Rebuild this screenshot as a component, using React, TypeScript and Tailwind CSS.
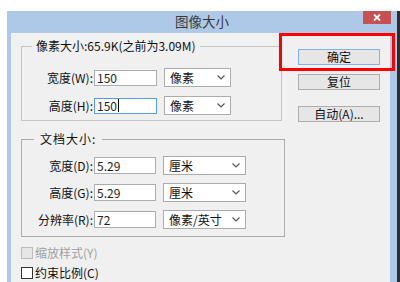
import React from "react";

const FONT = "font-['Microsoft_YaHei','Noto_Sans_CJK_SC',sans-serif]";

function Chevron() {
  return (
    <svg width="8" height="5" viewBox="0 0 8 5" className="shrink-0">
      <polyline points="0.5,0.5 4,4 7.5,0.5" fill="none" stroke="#555" strokeWidth="1.2" />
    </svg>
  );
}

function Field({
  label,
  value,
  unit,
  inputW,
  inputH,
  selectW,
  focused = false,
}: {
  label: string;
  value: string;
  unit: string;
  inputW: string;
  inputH: string;
  selectW: string;
  focused?: boolean;
}) {
  return (
    <div className="flex items-center h-[19px]">
      <div className="w-[71px] text-right text-[12px] leading-[16px] text-[#111]">{label}</div>
      <div
        className={`ml-[1px] ${inputW} ${inputH} flex items-center pl-[2px] bg-white border text-[12px] leading-[14px] text-[#222] ${
          focused ? "border-[#569de5]" : "border-[#abadb3]"
        }`}
      >
        {value}
        {focused && <span className="ml-[1px] w-[1px] h-[13px] bg-black" />}
      </div>
      <div
        className={`ml-[7px] ${selectW} h-[19px] flex items-center justify-between pl-[5px] pr-[5px] bg-white border border-[#acacac] text-[12px] leading-[14px] text-[#111]`}
      >
        <span>{unit}</span>
        <Chevron />
      </div>
    </div>
  );
}

function Button({ children, primary = false, className = "" }: { children: React.ReactNode; primary?: boolean; className?: string }) {
  return (
    <div
      className={`w-[82px] h-[16px] flex items-center justify-center bg-[#e6e6e6] border text-[12px] leading-[14px] text-[#111] ${
        primary ? "border-[#7eb4ea]" : "border-[#adadad]"
      } ${className}`}
    >
      {children}
    </div>
  );
}

export default function App() {
  return (
    <div className={`relative w-[400px] h-[282px] overflow-hidden bg-white pt-[11px] pl-[7px] ${FONT}`}>
      <div className="flex h-[271px]">
        <div className="flex flex-col w-[390px]">
          {/* title bar */}
          <div className="relative h-[22px] bg-[#adc9e7] flex items-center justify-center">
            <span className="text-[13.5px] leading-[16px] text-[#3a3a3a] mt-[-2px]">图像大小</span>
            <div className="absolute right-[6px] top-0 w-[28px] h-[13px] bg-[#c75050] flex items-center justify-center">
              <svg width="8" height="7" viewBox="0 0 8 7">
                <path d="M1 0.5 L7 6.5 M7 0.5 L1 6.5" stroke="#fff" strokeWidth="1.8" />
              </svg>
            </div>
          </div>

          {/* body */}
          <div className="flex flex-1 bg-[#f0f0f0] border-l-[4px] border-r-[7px] border-[#adc9e7]">
            <div className="pl-[10px] pt-[5px] flex flex-col">
              <fieldset className="w-[261px] border border-[#c4c4c4] pb-[5px]">
                <legend className="ml-[10px] px-[4px] text-[12px] leading-[16px] text-[#111]">
                  像素大小:65.9K(之前为3.09M)
                </legend>
                <div className="mt-[14px] flex flex-col gap-[9px]">
                  <Field label="宽度(W):" value="150" unit="像素" inputW="w-[63px]" inputH="h-[16px]" selectW="w-[67px]" />
                  <Field label="高度(H):" value="150" unit="像素" inputW="w-[63px]" inputH="h-[16px]" selectW="w-[67px]" focused />
                </div>
              </fieldset>

              <fieldset className="mt-[10px] w-[264px] border border-[#acacac] pb-[7px]">
                <legend className="ml-[12px] px-[6px] text-[12px] leading-[16px] tracking-[1px] text-[#111]">
                  文档大小:
                </legend>
                <div className="mt-[9px] flex flex-col gap-[8px]">
                  <Field label="宽度(D):" value="5.29" unit="厘米" inputW="w-[62px]" inputH="h-[17px]" selectW="w-[83px]" />
                  <Field label="高度(G):" value="5.29" unit="厘米" inputW="w-[62px]" inputH="h-[17px]" selectW="w-[83px]" />
                  <Field label="分辨率(R):" value="72" unit="像素/英寸" inputW="w-[62px]" inputH="h-[17px]" selectW="w-[83px]" />
                </div>
              </fieldset>

              <div className="mt-[9px] flex flex-col gap-[6px]">
                <div className="flex items-center h-[14px] gap-[2px]">
                  <div className="w-[12px] h-[12px] border border-[#bcbcbc] bg-[#e6e6e6]" />
                  <span className="text-[12px] leading-[14px] text-[#a0a0a0]">缩放样式(Y)</span>
                </div>
                <div className="flex items-center h-[14px] gap-[2px]">
                  <div className="w-[12px] h-[12px] border border-[#333] bg-white" />
                  <span className="text-[12px] leading-[14px] text-[#111]">约束比例(C)</span>
                </div>
              </div>
            </div>

            <div className="ml-[13px] pt-[16px] flex flex-col">
              <Button primary>确定</Button>
              <Button className="mt-[9px]">复位</Button>
              <Button className="mt-[16px]">自动(A)...</Button>
            </div>
          </div>
        </div>
        <div className="w-[3px] bg-[#2d2d2d]" />
      </div>

      {/* red highlight annotation */}
      <div className="absolute left-[279px] top-[33px] w-[116px] h-[38px] border-[3px] border-[#ff0000]" />
    </div>
  );
}
